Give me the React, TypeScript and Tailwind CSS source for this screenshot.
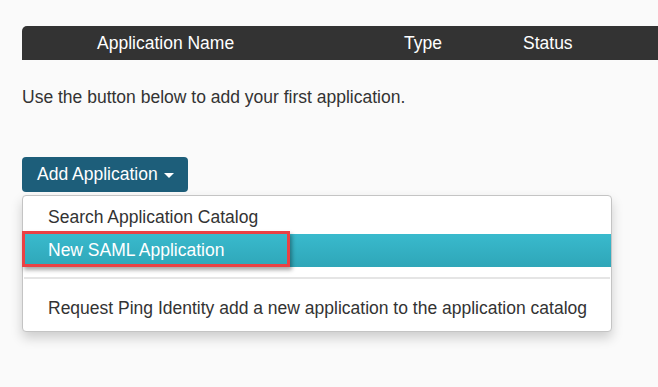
import React from "react";

export default function App() {
  return (
    <div className="min-h-screen w-[658px] h-[387px] overflow-hidden bg-[#fafafa] pl-[22px] pt-[26px] text-[#333333] [font-family:'Liberation_Sans',Arial,sans-serif]">
      {/* Table header */}
      <div className="grid h-[34px] grid-cols-[307px_119px_1fr] items-center rounded-tl-[5px] bg-[#333333] pl-[75px] text-[17.5px] text-white">
        <span>Application Name</span>
        <span>Type</span>
        <span>Status</span>
      </div>

      <p className="mt-[26px] text-[17.5px] leading-[23px]">Use the button below to add your first application.</p>

      {/* Add Application dropdown */}
      <div className="mt-[48px] w-[590px]">
        <button className="flex h-[35px] items-center gap-[6px] rounded-[4px] bg-[#1d5e7a] pl-[15px] pr-[14px] text-[17.5px] text-white">
          Add Application
          <span className="mt-[2px] h-0 w-0 border-x-[5px] border-t-[5px] border-x-transparent border-t-white" />
        </button>

        <div className="mt-[3px] rounded-[4px] border border-[#c4c4c4] bg-white pt-[5px] pb-[6px] text-[17.5px] shadow-[0_6px_12px_rgba(0,0,0,0.18)]">
          <div className="flex h-[33px] items-center pl-[25px]">Search Application Catalog</div>
          <div className="relative flex h-[33px] items-center bg-gradient-to-b from-[#39bacd] to-[#2fa6b8] pl-[25px] text-white">
            New SAML Application
            <div className="absolute -left-px -top-[3px] h-[36px] w-[268px] border-[3px] border-[#ea4144] shadow-[2px_3px_4px_rgba(0,0,0,0.35)]" />
          </div>
          <div className="mx-px mt-[10px] mb-[13px] h-[2px] bg-[#e5e5e5]" />
          <div className="flex h-[33px] items-center pl-[25px]">Request Ping Identity add a new application to the application catalog</div>
        </div>
      </div>
    </div>
  );
}
